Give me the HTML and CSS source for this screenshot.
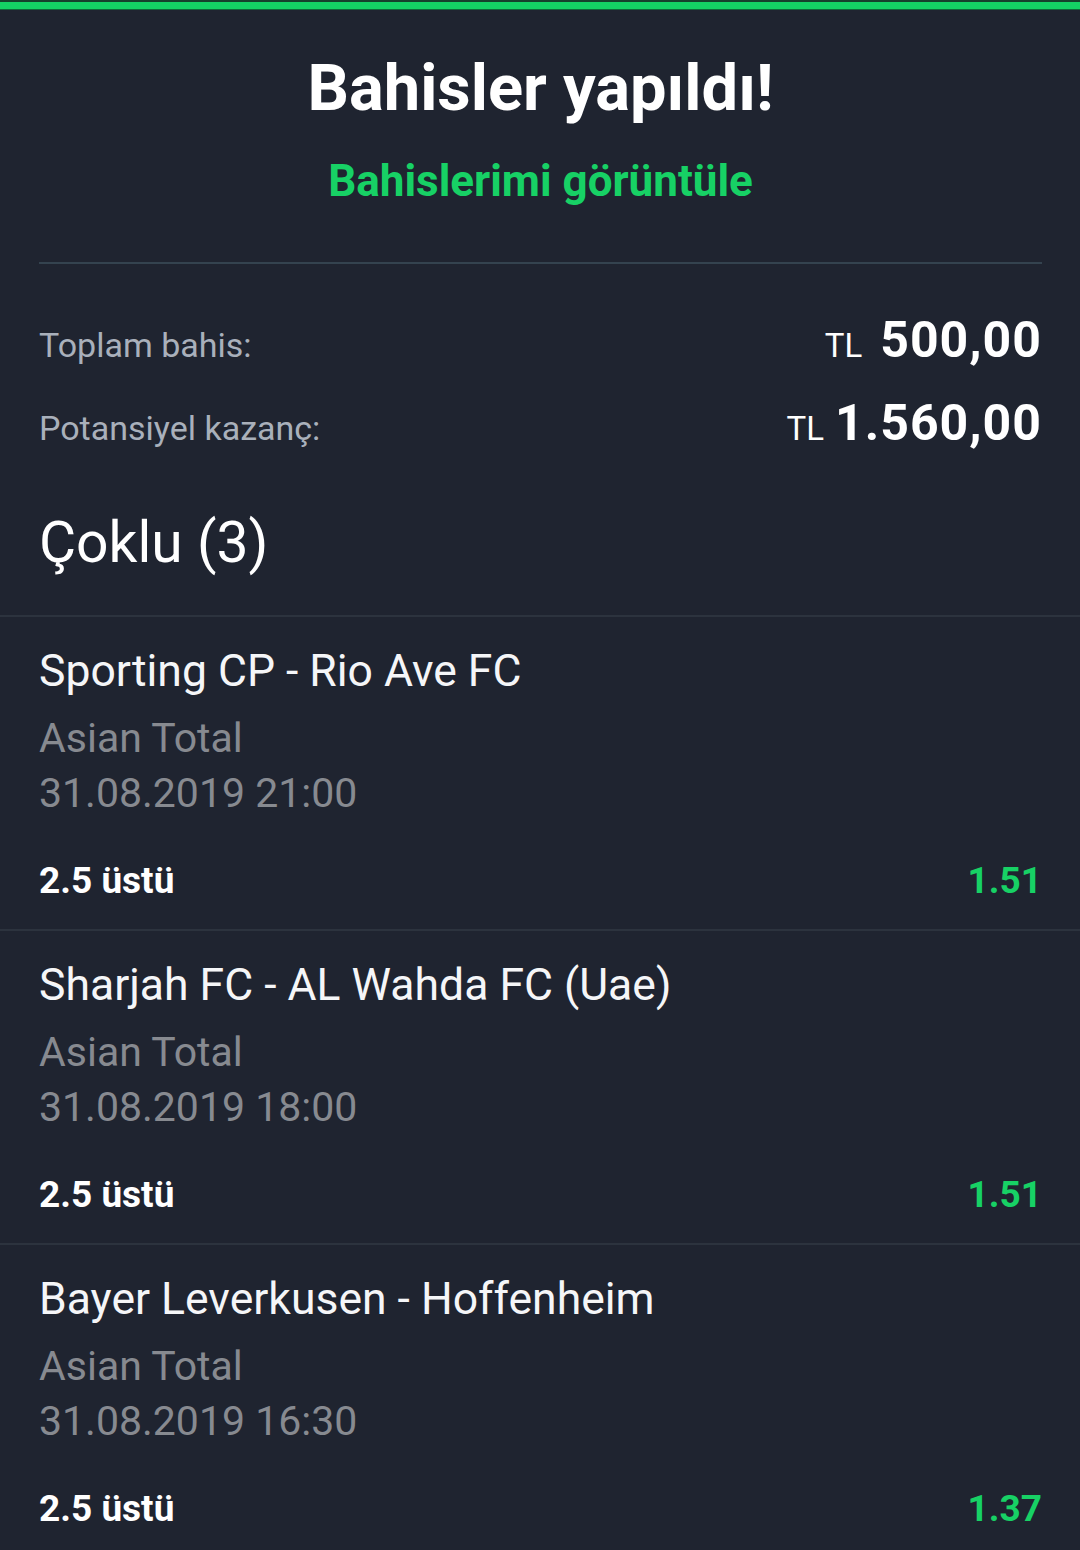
FILE: index.html
```html
<!DOCTYPE html>
<html lang="tr">
<head>
<meta charset="utf-8">
<title>Bahisler yapıldı!</title>
<link rel="stylesheet" href="styles.css">
</head>
<body>
<div class="topbar"></div>
<header class="head">
  <h1 class="title">Bahisler yapıldı!</h1>
  <a class="link">Bahislerimi görüntüle</a>
  <div class="sep"></div>
  <div class="row">
    <span class="label">Toplam bahis:</span>
    <span class="value"><span class="cur cur-wide">TL</span><span class="num">500,00</span></span>
  </div>
  <div class="row">
    <span class="label">Potansiyel kazanç:</span>
    <span class="value"><span class="cur">TL</span><span class="num">1.560,00</span></span>
  </div>
  <h2 class="multi">Çoklu (3)</h2>
</header>

<section class="bet">
  <div class="match">Sporting CP - Rio Ave FC</div>
  <div class="market">Asian Total</div>
  <div class="date">31.08.2019 21:00</div>
  <div class="pick"><span>2.5 üstü</span><span class="odd">1.51</span></div>
</section>
<section class="bet">
  <div class="match">Sharjah FC - AL Wahda FC (Uae)</div>
  <div class="market">Asian Total</div>
  <div class="date">31.08.2019 18:00</div>
  <div class="pick"><span>2.5 üstü</span><span class="odd">1.51</span></div>
</section>
<section class="bet">
  <div class="match">Bayer Leverkusen - Hoffenheim</div>
  <div class="market">Asian Total</div>
  <div class="date">31.08.2019 16:30</div>
  <div class="pick"><span>2.5 üstü</span><span class="odd">1.37</span></div>
</section>
</body>
</html>
```

FILE: styles.css
```css
html, body {
  margin: 0;
  padding: 0;
  background: #1f2430;
  font-family: Roboto, "Noto Sans", sans-serif;
  color: #ffffff;
}

.topbar {
  height: 7px;
  background: #14d264;
  border-top: 2px solid #16402c;
  border-bottom: 1px solid #0f6a3a;
}

.head {
  padding: 0 38px 0 39px;
}

.title {
  margin: 38px 0 0;
  font-size: 65px;
  line-height: 80px;
  font-weight: 700;
  text-align: center;
  color: #ffffff;
}

.link {
  display: block;
  margin-top: 23px;
  font-size: 44px;
  line-height: 60px;
  font-weight: 700;
  text-align: center;
  color: #17d165;
}

.sep {
  margin-top: 51px;
  height: 2px;
  background: #34434f;
}

.row {
  display: flex;
  justify-content: space-between;
  align-items: baseline;
  height: 83px;
  line-height: 83px;
}

.sep + .row {
  margin-top: 35px;
}

.label {
  font-size: 34px;
  color: #a9b0bb;
}

.cur {
  font-size: 33px;
  color: #ffffff;
  margin-right: 11px;
}

.cur-wide {
  margin-right: 18px;
}

.num {
  font-size: 50px;
  font-weight: 700;
  color: #ffffff;
  letter-spacing: 1px;
}

.multi {
  margin: 38px 0 32px;
  font-size: 57px;
  line-height: 80px;
  font-weight: 400;
  color: #ffffff;
}

.bet {
  border-top: 2px solid #2c333e;
  padding: 19px 38px 18px 39px;
}

.match {
  font-size: 44.5px;
  line-height: 70px;
  color: #f5f6f8;
}

.market {
  margin-top: 5px;
  font-size: 41px;
  line-height: 55px;
  color: #878a90;
}

.date {
  font-size: 41px;
  line-height: 55px;
  color: #878a90;
}

.pick {
  display: flex;
  justify-content: space-between;
  margin-top: 30px;
  font-size: 37px;
  line-height: 60px;
  font-weight: 700;
  color: #ffffff;
}

.odd {
  color: #17d165;
}
```
